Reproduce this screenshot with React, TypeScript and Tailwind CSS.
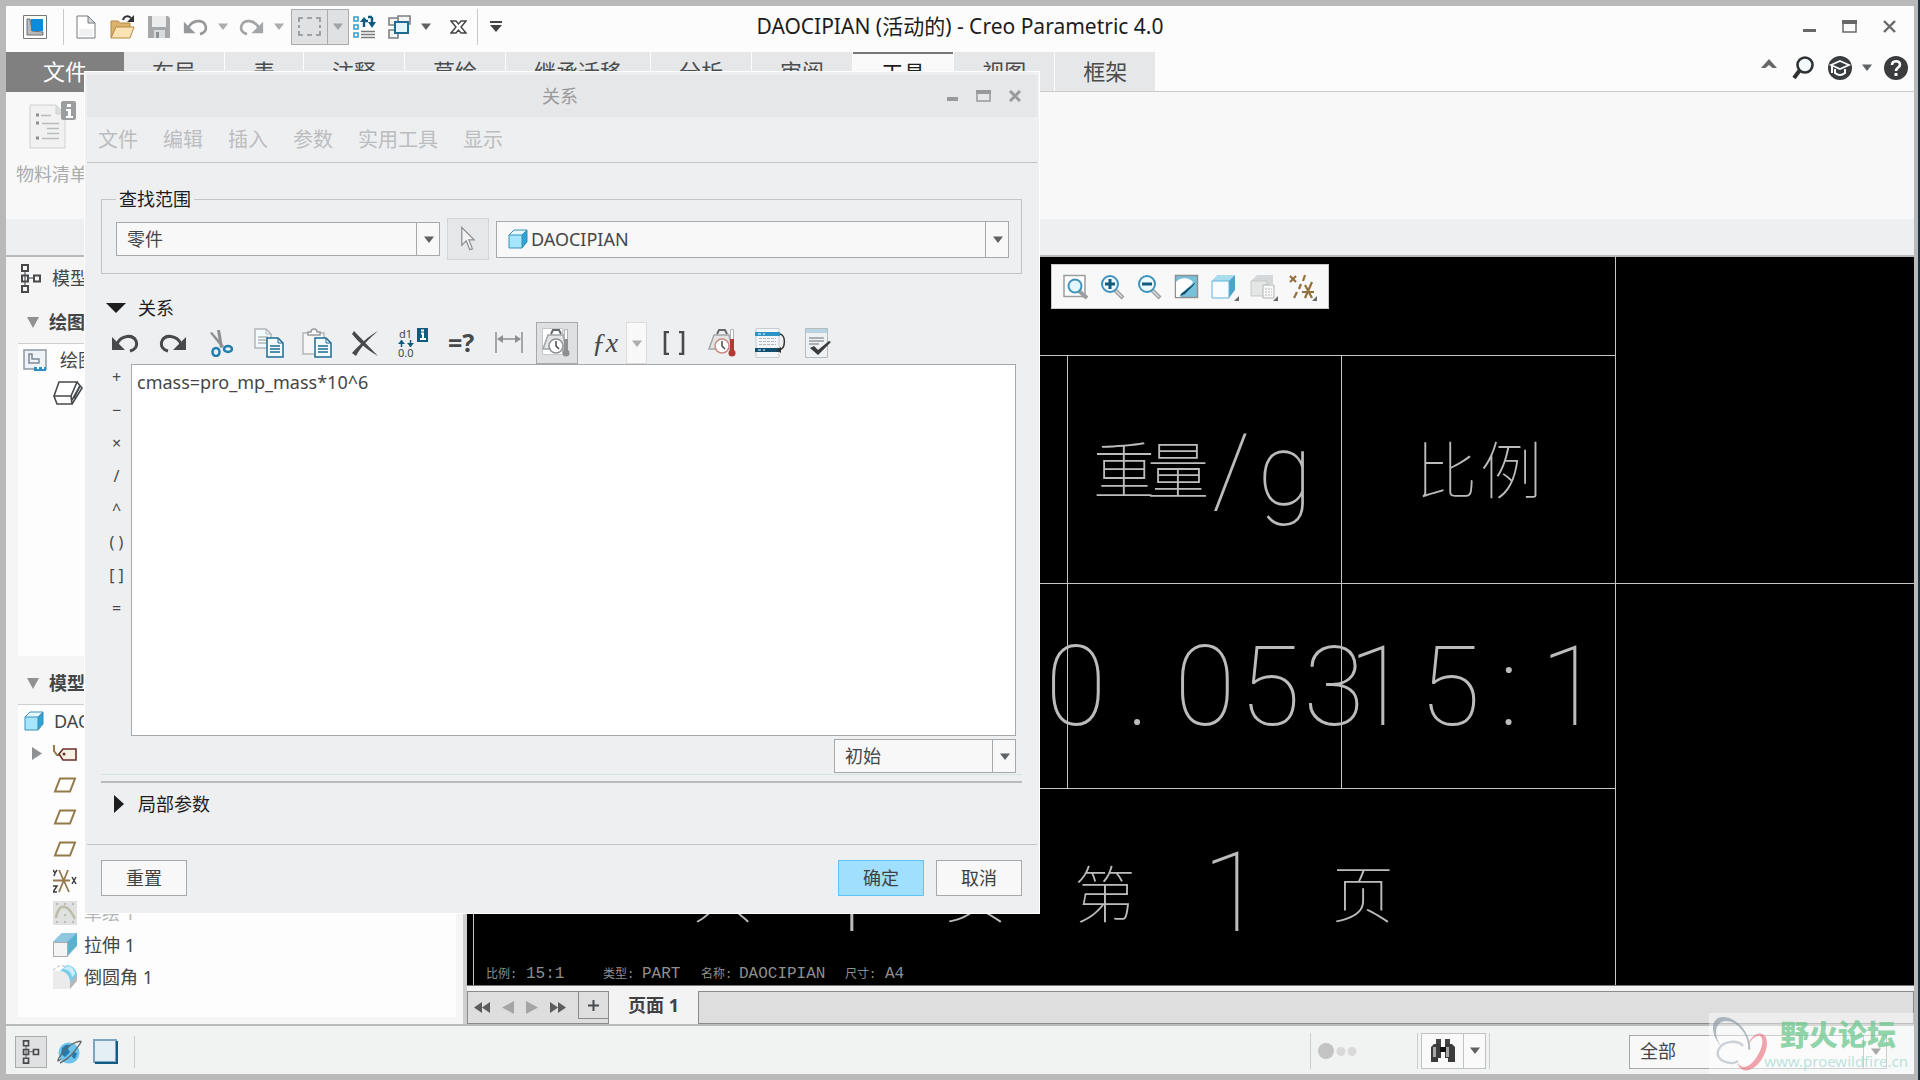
import type { ReactNode } from "react";

type IconProps = { w?: number; h?: number; vb?: string; className?: string; children: ReactNode };

function Svg({ w = 24, h = 24, vb, className = "", children }: IconProps) {
  return (
    <svg width={w} height={h} viewBox={vb ?? `0 0 ${w} ${h}`} fill="none" className={`shrink-0 ${className}`} aria-hidden="true">
      {children}
    </svg>
  );
}

const Down = ({ color = "#5f6163" }: { color?: string }) => (
  <Svg w={10} h={7}><path d="M0 0.5h10L5 7z" fill={color} /></Svg>
);

const Cube = () => (
  <Svg w={20} h={20}>
    <path d="M1 6l5-5h13v12l-5 6H1z" fill="#2fa4d8" />
    <path d="M6 1h13l-5 5H1z" fill="#e4f7fe" />
    <path d="M1 6h13v13H1z" fill="#a6e6fc" />
    <path d="M1 6l5-5h13v12l-5 6H1zM1 6h13v13M14 6l5-5" stroke="#3b8fb5" />
  </Svg>
);

const TreeIcon = ({ w = 20, h = 29 }: { w?: number; h?: number }) => (
  <Svg w={w} h={h} vb="0 0 20 29">
    <path d="M4 7v14M8 14h5" stroke="#77797b" strokeWidth="1.5" />
    <path d="M1 1h6v6H1zM1 11.5h6v6H1zM1 22h6v6H1zM13 11.5h6v6h-6z" stroke="#47494b" strokeWidth="2" />
  </Svg>
);

function UndoIcon({ color, w = 28, h = 20 }: { color: string; w?: number; h?: number }) {
  return (
    <Svg w={w} h={h} vb="0 0 28 20">
      <path d="M6 11C10 2 22 1 25 8c2 5-1 9-6 10" stroke={color} strokeWidth="3" />
      <path d="M1 4v13h13z" fill={color} />
    </Svg>
  );
}

function RedoIcon({ color, w = 28, h = 20 }: { color: string; w?: number; h?: number }) {
  return (
    <Svg w={w} h={h} vb="0 0 28 20">
      <path d="M22 11C18 2 6 1 3 8c-2 5 1 9 6 10" stroke={color} strokeWidth="3" />
      <path d="M27 4v13H14z" fill={color} />
    </Svg>
  );
}

const NewIcon = () => (
  <Svg w={20} h={24}>
    <path d="M1 1h11l7 7v15H1z" fill="#fff" stroke="#77797b" />
    <path d="M3 14h14v7H3z" fill="#f0f1f2" />
    <path d="M12 1v7h7z" fill="#d5d7d9" stroke="#77797b" />
  </Svg>
);

const OpenIcon = () => (
  <Svg w={25} h={24}>
    <path d="M1 23V6h7l2 2h10v4" fill="#dbb36c" stroke="#b58a42" />
    <path d="M1 23l5-11h18l-4 11z" fill="#fbe3b4" stroke="#b58a42" />
    <path d="M13 5c1-4 5-5 8-2" stroke="#333" strokeWidth="2" />
    <path d="M24 0v7h-7z" fill="#333" />
  </Svg>
);

const SaveIcon = () => (
  <Svg w={24} h={24}>
    <path d="M1 1h20l2 2v20H1z" fill="#a6a8aa" />
    <path d="M5 1h14v11H5z" fill="#ececec" />
    <path d="M7 15h11v8H7z" fill="#d9dadb" />
    <path d="M9 17h3v6H9z" fill="#8e9092" />
  </Svg>
);

const AppIcon = () => (
  <Svg w={24} h={24}>
    <path d="M.5.5h23v23H.5z" fill="#fff" stroke="#777" />
    <path d="M4 4h3l2 12 11 1v3H4z" fill="#b9bbbd" stroke="#6d6f71" />
    <path d="M8 4h12v12H8z" fill="#0d8bdb" />
  </Svg>
);

const RegenIcon = () => (
  <Svg w={23} h={24}>
    <path d="M1 2h4v4H1zM1 10h4v4H1zM1 18h4v4H1z" stroke="#3a9ed0" strokeWidth="1.6" />
    <path d="M8 16.500h14M8 19.500h14M8 22.500h14" stroke="#77797b" strokeWidth="1.5" />
    <path d="M11 12V6h4M19 2v6M15 2h4" stroke="#115a80" strokeWidth="2.4" />
    <path d="M7 7h8l-4-5zM15 7h8l-4 6z" fill="#115a80" />
  </Svg>
);

const WindowsIcon = () => (
  <Svg w={23} h={24}>
    <path d="M10 1h12v8H10zM1 3h9v7H1zM1 15h9v8H1z" fill="#f4f4f4" stroke="#7d7f81" strokeWidth="1.6" />
    <path d="M7 7h13v11H7z" fill="#e6f6fd" stroke="#1e6c94" strokeWidth="2" />
  </Svg>
);

const CloseWinIcon = () => (
  <Svg w={17} h={14}>
    <path d="M1 1h5l2.500 3L11 1h5l-5 6 5 6h-5l-2.500-3L6 13H1l5-6z" fill="#fff" stroke="#444" strokeWidth="1.4" />
  </Svg>
);

const DropBtn = ({ label, color }: { label: string; color?: string }) => (
  <button aria-label={label} className="ml-[3px] flex w-6 justify-center"><Down color={color} /></button>
);

function TitleBar() {
  return (
    <header className="relative flex h-[46px] shrink-0 items-center bg-[#fcfcfc]">
      <h1 className="absolute inset-x-0 top-1 bottom-1 text-center text-[21px] leading-8 text-[#1d1d1d]">
        DAOCIPIAN (活动的) - Creo Parametric 4.0
      </h1>
      <div className="relative flex items-center pb-[5px]">
        <button aria-label="应用程序" className="ml-[17px]"><AppIcon /></button>
        <span className="ml-4 h-9 w-px bg-[#c9c9c9]" />
        <button aria-label="新建" className="ml-3"><NewIcon /></button>
        <button aria-label="打开" className="ml-3.5"><OpenIcon /></button>
        <button aria-label="保存" className="ml-3"><SaveIcon /></button>
        <button aria-label="撤消" className="ml-3"><UndoIcon color="#97999b" w={25} h={18} /></button>
        <DropBtn label="撤消列表" color="#adadad" />
        <button aria-label="重做" className="ml-1"><RedoIcon color="#a3a5a7" w={25} h={18} /></button>
        <DropBtn label="重做列表" color="#adadad" />
        <div className="flex h-9 items-stretch border border-[#ababab] bg-[#e0e1e3]">
          <button aria-label="选择" className="flex w-[35px] items-center justify-center">
            <Svg w={23} h={19}><path d="M1 5V1h4M9 1h5M18 1h4v4M22 8v3M22 14v4h-4M14 18H9M5 18H1v-4M1 11V8" stroke="#8c8e90" strokeWidth="1.6" /></Svg>
          </button>
          <button aria-label="选择选项" className="flex w-[21px] items-center justify-center border-l border-[#ababab]"><Down color="#a3a3a3" /></button>
        </div>
        <button aria-label="重新生成" className="ml-1"><RegenIcon /></button>
        <button aria-label="窗口" className="ml-3"><WindowsIcon /></button>
        <DropBtn label="窗口列表" />
        <button aria-label="关闭窗口" className="ml-3"><CloseWinIcon /></button>
        <span className="ml-2.5 h-9 w-px bg-[#c9c9c9]" />
        <button aria-label="自定义" className="ml-3">
          <Svg w={12} h={11}><path d="M0 0h12v2H0zM0 4h12L6 11z" fill="#444" /></Svg>
        </button>
      </div>
      <div className="relative ml-auto flex items-center gap-[26px] pr-[18px] pb-1.5">
        <button aria-label="最小化"><Svg w={13} h={13}><path d="M0 9h13v3H0z" fill="#66686a" /></Svg></button>
        <button aria-label="最大化"><Svg w={15} h={13}><path d="M1 1h13v11H1z" stroke="#66686a" strokeWidth="1.5" /><path d="M0 0h15v4H0z" fill="#66686a" /></Svg></button>
        <button aria-label="关闭"><Svg w={13} h={13}><path d="M1 1l11 11M12 1L1 12" stroke="#66686a" strokeWidth="2.4" /></Svg></button>
      </div>
    </header>
  );
}

const tabs = ["布局", "表", "注释", "草绘", "继承迁移", "分析", "审阅", "工具", "视图", "框架"];

function Ribbon() {
  return (
    <>
      <nav className="flex h-10 shrink-0 items-stretch border-b border-[#cccccc] bg-[#fcfcfc] text-[22px] leading-9">
        <button className="-mb-px bg-[#808080] px-[37px] pb-[3px] text-white">文件</button>
        <div className="flex gap-px">
          {tabs.map((t) => (
            <button
              key={t}
              className={
                t === "工具"
                  ? "-mb-px border-t-2 border-[#777777] bg-[#f9f9f9] px-7 pb-1 text-[#1d1d1d]"
                  : "bg-[#e6e7e9] px-7 pb-0.5 text-[#4a4c4e]"
              }
            >
              {t}
            </button>
          ))}
        </div>
        <div className="ml-auto flex items-center pr-1.5 pb-2">
          <button aria-label="折叠功能区" className="mr-[15px] pb-2"><Svg w={16} h={9}><path d="M0 9L8 0l8 9h-4.500L8 6 4.500 9z" fill="#66686a" /></Svg></button>
          <button aria-label="搜索" className="mr-3.5">
            <Svg w={22} h={23}><path d="M8 14l-6 8" stroke="#2f3133" strokeWidth="4" /><circle cx="13" cy="9" r="7.500" fill="#f2fafd" stroke="#2f3133" strokeWidth="2.600" /></Svg>
          </button>
          <button aria-label="学习中心">
            <Svg w={24} h={24}><circle cx="12" cy="12" r="12" fill="#3a3c3e" /><path d="M12 5l9 4-9 4-9-4z" fill="#3a3c3e" stroke="#fff" strokeWidth="1.700" /><path d="M7 13v4c3 2.500 7 2.500 10 0v-4M4 10v7" stroke="#fff" strokeWidth="2" /></Svg>
          </button>
          <DropBtn label="学习中心列表" />
          <button aria-label="帮助" className="ml-[5px]">
            <Svg w={24} h={24}><circle cx="12" cy="12" r="12" fill="#3a3c3e" /><path d="M8 9c0-5 8-5 8-.5 0 3-4 3-4 6.500" stroke="#fff" strokeWidth="2.600" /><path d="M10.500 17h3v3h-3z" fill="#fff" /></Svg>
          </button>
        </div>
      </nav>
      <section className="h-[127px] shrink-0 bg-[#f8f8f8] pt-[9px] pl-2.5">
        <button disabled className="flex flex-col items-start text-[18px] leading-7 text-[#a9abad]">
          <Svg w={50} h={49} className="ml-[13px]">
            <path d="M1 4h26l9 9v34H1z" fill="#f1f1f1" stroke="#cfd0d1" />
            <path d="M27 4v9h9z" fill="#dddede" stroke="#cfd0d1" />
            <path d="M7 14h3M7 22h3M7 37h3" stroke="#8c8e90" strokeWidth="3" />
            <path d="M12 14.500h10M13 22.500h17M18 27.500h12M18 32.500h12M13 37.500h17" stroke="#b9bbbd" strokeWidth="1.500" />
            <rect x="32" y="0" width="15" height="19" rx="2" fill="#9b9d9f" />
            <path d="M38 3h4v3h-4zM37 8h5v7h2v2h-7v-2h2v-5h-2z" fill="#fff" />
          </Svg>
          <span className="mt-2.5">物料清单</span>
        </button>
      </section>
      <div className="h-[38px] shrink-0 border-b-2 border-[#b9b9b9] bg-[#eeeff1]" />
    </>
  );
}

const Plane = () => (
  <Svg w={24} h={16}><path d="M7 1.500h15l-5 13H2z" fill="#fff" stroke="#94794a" strokeWidth="2" /></Svg>
);

function Row({ icon, label, dim = false, caret = false }: { icon: ReactNode; label?: string; dim?: boolean; caret?: boolean }) {
  return (
    <li className={`flex h-8 items-center pl-3.5 text-[18px] leading-8 ${dim ? "text-[#b4b6b8]" : "text-[#444648]"}`}>
      <span className="w-[21px]">{caret && <Svg w={11} h={13}><path d="M0 0l10 6.500L0 13z" fill="#8f9193" /></Svg>}</span>
      <span className="flex w-[31px]">{icon}</span>
      {label}
    </li>
  );
}

function SidePanel() {
  return (
    <aside className="flex w-[457px] shrink-0 flex-col bg-[#f5f5f5] pr-[7px] pb-[7px] pl-3 text-[#444648]">
      <div className="flex h-[43px] shrink-0 items-center gap-[11px] pl-[3px] text-[18px]"><TreeIcon />模型树</div>
      <h2 className="flex h-11 shrink-0 items-center gap-2.5 border-b border-[#cfcfcf] pt-px pl-[9px] text-[18px] font-bold">
        <Svg w={12} h={11}><path d="M0 0h12L6 11z" fill="#8f9193" /></Svg>绘图树
      </h2>
      <div className="h-[312px] shrink-0 bg-[#fdfdfd] pl-[5px] text-[18px]">
        <div className="flex h-8 items-center gap-[13px]">
          <Svg w={24} h={22}>
            <path d="M1 1h22v19H1z" fill="#eef3f7" stroke="#8d99a3" strokeWidth="1.500" />
            <path d="M6 5h3v5h7v4H6z" stroke="#7f8b95" strokeWidth="1.500" />
            <path d="M11 18h12v4H11z" fill="#2b8fc7" />
            <path d="M14 19h2M19 19h2" stroke="#fff" strokeWidth="2" />
          </Svg>
          绘图
        </div>
        <div className="pt-[5px] pl-[30px]">
          <Svg w={30} h={24}>
            <path d="M6 1h18l-6 14H1z" fill="#fff" stroke="#47494b" strokeWidth="1.600" />
            <path d="M1 15l3 8h15l-1-8M19 23l10-16-5-6M21 17l6-12" stroke="#47494b" strokeWidth="1.600" />
            <path d="M19 19L27 5" stroke="#47494b" strokeWidth="1.600" />
          </Svg>
        </div>
      </div>
      <h2 className="flex h-[49px] shrink-0 items-center gap-2.5 border-b border-[#cfcfcf] pt-1.5 pl-[9px] text-[18px] font-bold">
        <Svg w={12} h={11}><path d="M0 0h12L6 11z" fill="#8f9193" /></Svg>模型树
      </h2>
      <ul className="min-h-0 flex-1 overflow-hidden bg-[#fdfdfd]">
        <li className="flex h-8 items-center gap-2.5 pl-1.5 text-[18px]"><Cube />DAOCIPIAN.PRT</li>
        <Row caret icon={
          <Svg w={24} h={17}><path d="M1 0v6l3 4h4" stroke="#94794a" strokeWidth="2" /><path d="M6 9l4-5h13v11H10z" fill="#f7f1e4" stroke="#6b3028" strokeWidth="1.600" /><circle cx="11" cy="9" r="1.500" fill="#6b3028" /></Svg>
        } />
        <Row icon={<Plane />} />
        <Row icon={<Plane />} />
        <Row icon={<Plane />} />
        <Row icon={
          <Svg w={24} h={24}>
            <path d="M0 11.500h17M6 1l10 22M15 1L6 23" stroke="#94794a" strokeWidth="1.800" />
            <path d="M0 1l2 3 2-3M2 4L1 7M0 17h4l-4 6h4M19 8l4 7M23 8l-4 7" stroke="#3a3c3e" strokeWidth="1.500" />
          </Svg>
        } />
        <Row dim label="草绘 1" icon={
          <Svg w={24} h={24}>
            <path d="M0 0h24v24H0z" fill="#e0e1e1" />
            <path d="M3 3h2M11 3h2M19 3h2M3 12h2M19 21h2M11 21h2M3 21h2M11 14h2" stroke="#bcbcae" strokeWidth="2" />
            <path d="M3 17C5 6 9 5 12 6c4 1 7 6 10 12" stroke="#bdbda8" strokeWidth="2.500" />
          </Svg>
        } />
        <Row label="拉伸 1" icon={
          <Svg w={24} h={24}>
            <path d="M0 9l9-9h15v13L14 24V9z" fill="#5fb0cf" />
            <path d="M9 0h15L14 9H0z" fill="#8fc8de" />
            <path d="M14 23l10-10V14z" fill="#d4effa" />
            <path d="M.5 9.500h14v14H.5z" fill="#f4f4f4" stroke="#a9abad" />
          </Svg>
        } />
        <Row label="倒圆角 1" icon={
          <Svg w={24} h={24}>
            <path d="M0 6h7c7 0 10 6 10 10v8H0z" fill="#ebebeb" />
            <path d="M17 16l7-7v7l-7 8z" fill="#b5b7b9" />
            <path d="M7 6l7-6c7 1 10 6 10 10l-7 8C17 11 13 6 7 6z" fill="#7accec" />
            <path d="M10 4l5-3c5 1 7 5 7 8l-3 3c0-4-4-8-9-8z" fill="#c9edfa" />
            <path d="M0 5l6-4h6" stroke="#b5b7b9" strokeDasharray="3 2" />
          </Svg>
        } />
      </ul>
    </aside>
  );
}

const Corner = ({ x, y }: { x: number; y: number }) => <path d={`M${x} ${y}v-5l-5 5z`} fill="#66686a" />;

function Magnifier({ children }: { children?: ReactNode }) {
  return (
    <Svg w={26} h={26}>
      <path d="M15 16l8 8" stroke="#9b9d9f" strokeWidth="4" />
      <path d="M15 16l7 7" stroke="#dcddde" strokeWidth="1.500" />
      <circle cx="10" cy="10" r="8" fill="#eef9fe" stroke="#3f93ba" strokeWidth="2" />
      {children}
    </Svg>
  );
}

function ViewToolbar() {
  return (
    <div role="toolbar" aria-label="视图控制" className="absolute top-[7px] left-[584px] flex h-[45px] items-center gap-[11px] border border-[#c9c9c9] bg-[#f8f8f8] px-[11px]">
      <button aria-label="重新调整">
        <Svg w={26} h={26}>
          <path d="M1 1.500h21v21H1z" fill="#fff" stroke="#9b9d9f" strokeWidth="1.500" />
          <path d="M16 17l8 7" stroke="#9b9d9f" strokeWidth="4" />
          <circle cx="12" cy="12" r="6.500" fill="#e4f5fc" stroke="#3f93ba" strokeWidth="2" />
        </Svg>
      </button>
      <button aria-label="放大"><Magnifier><path d="M10 5v10M5 10h10" stroke="#115a80" strokeWidth="3" /></Magnifier></button>
      <button aria-label="缩小"><Magnifier><path d="M5 10h10" stroke="#115a80" strokeWidth="3" /></Magnifier></button>
      <button aria-label="重画">
        <Svg w={26} h={26}>
          <path d="M1.500 1.500h22v22h-22z" fill="#79c0da" stroke="#8d8f91" strokeWidth="1.500" />
          <path d="M2 8c3-4 12-6 17 0-2 4-6 6-10 10l-3 5H2z" fill="#fff" />
          <path d="M22 8c-3 5-8 8-11 12l-5 2c1-4 5-4 7-7 3-2 5-4 9-7z" fill="#0f4f70" />
        </Svg>
      </button>
      <button aria-label="显示样式">
        <Svg w={28} h={28}>
          <path d="M1 8l6-6h17v15l-6 8H1z" fill="#4da4cb" />
          <path d="M7 2h17l-6 6H1z" fill="#aadcf0" />
          <path d="M1 8h17v17H1z" fill="#f6fcff" stroke="#62b4d8" />
          <Corner x={28} y={28} />
        </Svg>
      </button>
      <button aria-label="已保存方向">
        <Svg w={28} h={28}>
          <path d="M1 8l6-6h16v9h-4v12H1z" fill="#d6d7d8" />
          <path d="M1 8h16v15H1z" fill="#e4e5e5" stroke="#c6c7c8" />
          <path d="M13 12h11v13H13z" fill="#f8f8f8" stroke="#b4b5b6" />
          <path d="M15 16h7M15 19h7M15 22h7" stroke="#b4b5b6" strokeDasharray="2 1" />
          <Corner x={28} y={28} />
        </Svg>
      </button>
      <button aria-label="基准显示过滤器">
        <Svg w={28} h={28}>
          <path d="M1 3l6 6M7 3L1 9M16 2l-2 6M12 11l-2 5M8 19l-3 6M13 19h12M23 9l-7 16M16 12l7 13" stroke="#94703a" strokeWidth="2.200" />
          <Corner x={28} y={28} />
        </Svg>
      </button>
    </div>
  );
}

function Canvas() {
  return (
    <div className="relative min-h-0 flex-1 overflow-hidden border-b border-[#777777] bg-black">
      <svg className="absolute inset-0 h-full w-full" role="img" aria-label="工程图">
        <path
          d="M6.500 0V728M600.500 98V531M874.500 98V531M1148.500 0V728M6 98.500H1148M6 326.500H2400M6 531.500H1148"
          stroke="#c6c6c6"
          shapeRendering="crispEdges"
        />
        <g className="fill-[#bcbcbc] font-thin" textAnchor="middle">
          <g className="font-['Noto_Sans_CJK_SC',sans-serif] text-[62px]">
            <text x="657 711" y="237">重量</text>
            <text x="979 1044" y="237">比例</text>
            <text x="256" y="661">共</text>
            <text x="509" y="661">页</text>
            <text x="638" y="661">第</text>
            <text x="896" y="661">页</text>
          </g>
          <g className="font-['Roboto','Noto_Sans_CJK_SC',sans-serif]">
            <text x="764 818" y="248" className="text-[100px]">/g</text>
            <text x="609 671 738 803 867" y="468" className="text-[112px]">0.053</text>
            <text x="912 983 1042 1104" y="468" className="text-[112px]">15:1</text>
            <text x="381" y="674" className="text-[112px]">1</text>
            <text x="766" y="674" className="text-[112px]">1</text>
          </g>
        </g>
        <g className="fill-[#8f8f8f] font-['Liberation_Mono','Noto_Sans_CJK_SC',monospace] text-[16px]">
          <text x="19" y="721" className="text-[12px]">比例:</text>
          <text x="59" y="721">15:1</text>
          <text x="136" y="721" className="text-[12px]">类型:</text>
          <text x="175" y="721">PART</text>
          <text x="234" y="721" className="text-[12px]">名称:</text>
          <text x="272" y="721">DAOCIPIAN</text>
          <text x="378" y="721" className="text-[12px]">尺寸:</text>
          <text x="418" y="721">A4</text>
        </g>
      </svg>
      <ViewToolbar />
    </div>
  );
}

function SheetBar() {
  return (
    <div className="flex h-[38px] shrink-0 items-stretch bg-[#f3f3f3] pt-[5px]">
      <div className="flex items-center gap-3 border border-[#8a8a8a] bg-[#dedede] pl-1.5">
        <button aria-label="第一页"><Svg w={16} h={11}><path d="M8 0v11L0 5.500zM16 0v11L8 5.500z" fill="#5a5c5e" /></Svg></button>
        <button aria-label="上一页"><Svg w={12} h={13}><path d="M12 0v13L0 6.500z" fill="#a3a5a7" /></Svg></button>
        <button aria-label="下一页"><Svg w={12} h={13}><path d="M0 0v13l12-6.500z" fill="#a3a5a7" /></Svg></button>
        <button aria-label="最后一页"><Svg w={16} h={11}><path d="M0 0v11l8-5.500zM8 0v11l8-5.500z" fill="#5a5c5e" /></Svg></button>
        <button aria-label="新页面" className="flex h-[27px] w-[30px] items-center justify-center self-start border-b border-l border-[#8a8a8a]">
          <Svg w={11} h={11}><path d="M5.500 0v11M0 5.500h11" stroke="#47494b" strokeWidth="2" /></Svg>
        </button>
      </div>
      <button className="w-[89px] pb-1.5 text-[18px] leading-7 font-bold text-[#3f4143]">页面 1</button>
      <div className="flex-1 border border-[#8a8a8a] bg-[#dedede]" />
    </div>
  );
}

function StatusBar() {
  return (
    <footer className="flex h-[50px] shrink-0 items-center border-t-2 border-[#b9b9b9] bg-[#f1f3f2] pt-[3px]">
      <button aria-label="模型树" className="ml-[9px] flex h-8 w-8 items-center justify-center border border-[#ababab] bg-[#e0e1e3]">
        <TreeIcon w={18} h={24} />
      </button>
      <button aria-label="浏览器" className="ml-[9px]">
        <Svg w={26} h={26}>
          <circle cx="13" cy="14" r="10.500" fill="#6cc3ec" />
          <path d="M6 9c3-3 5-4 8-3l-2 4 2 3-5 5-4-3zM17 13l4 1-2 6-3-2z" fill="#2279ab" />
          <path d="M5 20C-3 27 6 13 12 8S26 1 25 3 21 9 17 14 8 22 4 24" stroke="#66686a" strokeWidth="1.400" />
        </Svg>
      </button>
      <button aria-label="全屏" className="ml-[11px]">
        <Svg w={25} h={25}><path d="M1 1h22v22H1z" fill="#e3eef5" stroke="#7fa5bc" strokeWidth="2" /><path d="M24 2v22H2" stroke="#115a80" strokeWidth="2" /></Svg>
      </button>
      <span className="ml-4 h-8 w-px bg-[#cdcdcd]" />
      <div className="ml-auto flex h-9 items-center pb-0.5">
        <span className="h-9 w-px bg-[#cdcdcd]" />
        <Svg w={40} h={18} className="ml-[7px]"><circle cx="8" cy="9" r="8" fill="#c3c3c3" /><circle cx="23" cy="9.500" r="4.500" fill="#d9d9d9" /><circle cx="34" cy="9.500" r="4.500" fill="#d9d9d9" /></Svg>
        <span className="ml-[59px] h-9 w-px bg-[#cdcdcd]" />
        <div className="ml-[3px] flex h-9 items-stretch border border-[#c0c2c4] bg-[#fafafa]">
          <button aria-label="查找" className="flex w-[41px] items-center justify-center">
            <Svg w={24} h={23}>
              <path d="M5 0h5v6H5zM14 0h5v6h-5z" fill="#444" />
              <path d="M0 8l3-3h7v14H7v4H0zM24 8l-3-3h-7v14h3v4h7z" fill="#3c3c3c" />
              <path d="M2 8h3v10H2zM15 8h3v10h-3z" fill="#a8a8a8" />
              <path d="M9 8h6v5H9z" fill="#111" />
            </Svg>
          </button>
          <button aria-label="查找列表" className="flex w-[22px] items-center justify-center border-l border-[#c0c2c4]"><Down /></button>
        </div>
        <span className="ml-[3px] h-9 w-px bg-[#cdcdcd]" />
      </div>
      <div className="mr-[27px] ml-[139px] w-[258px]"><Select label="过滤器" value="全部" className="h-[34px]" /></div>
    </footer>
  );
}

function Select({ label, value, className, indent = "pl-2.5", icon }: { label: string; value: string; className: string; indent?: string; icon?: ReactNode }) {
  return (
    <div className={`relative w-full ${className}`}>
      <select aria-label={label} className={`h-full w-full appearance-none rounded-none border border-[#a6a8aa] bg-[#f8f8f8] pr-7 text-[18px] text-[#444648] ${indent}`}>
        <option>{value}</option>
      </select>
      {icon && <span className="pointer-events-none absolute inset-y-0 left-3 flex items-center">{icon}</span>}
      <span className="pointer-events-none absolute inset-y-0 right-0 flex w-6 items-center justify-center border-l border-[#a6a8aa]"><Down /></span>
    </div>
  );
}

const menus = ["文件", "编辑", "插入", "参数", "实用工具", "显示"];

const Sheet = ({ x, y, stroke }: { x: number; y: number; stroke: string }) => (
  <g transform={`translate(${x} ${y})`}>
    <path d="M1 1h11l5 5v14H1z" fill="#f2fafe" stroke={stroke} strokeWidth="1.500" />
    <path d="M4 9h10M4 12h10M4 15h10" stroke={stroke} strokeWidth="1.500" />
    <path d="M12 1v5h5" stroke={stroke} />
  </g>
);

const Weight = ({ color, ring }: { color: string; ring: string }) => (
  <>
    <path d="M6 7h15l3 14H1z" fill="#e3e4e5" stroke="#a3a5a7" strokeWidth="1.500" />
    <path d="M9 6l2-4h6l2 4" stroke="#66686a" strokeWidth="2" />
    <circle cx="14" cy="18" r="7" fill="#fff" stroke={ring} strokeWidth="1.500" />
    <path d="M14 13v5l3 3" stroke="#47494b" strokeWidth="1.500" />
    <path d="M22.500 1.500h3v22h-3z" fill="#fff" stroke="#b0b2b4" />
    <path d="M22 11h4v12h-4z" fill={color} />
    <circle cx="24" cy="25" r="3.500" fill={color} />
  </>
);

const tools: { label: string; icon: ReactNode; active?: boolean }[] = [
  { label: "撤消", icon: <UndoIcon color="#47494b" /> },
  { label: "重做", icon: <RedoIcon color="#47494b" /> },
  {
    label: "剪切",
    icon: (
      <Svg w={24} h={27}>
        <path d="M1 3l2-1 12 14-2 2zM8 0h3l3 17-3 1z" fill="#8d8f91" />
        <ellipse cx="7" cy="22" rx="3.500" ry="4" stroke="#1e7fae" strokeWidth="2.500" />
        <ellipse cx="19" cy="19" rx="4" ry="3" stroke="#1e7fae" strokeWidth="2.500" />
      </Svg>
    ),
  },
  { label: "复制", icon: <Svg w={30} h={30}><Sheet x={0} y={0} stroke="#b4b6b8" /><Sheet x={12} y={9} stroke="#1e6c94" /></Svg> },
  {
    label: "粘贴",
    icon: (
      <Svg w={30} h={30}>
        <path d="M1 5h21v21H1z" fill="#f6f6f6" stroke="#b4b6b8" strokeWidth="1.500" />
        <path d="M6 7V4h3c0-4 6-4 6 0h3v3z" fill="#fff" stroke="#97999b" strokeWidth="1.500" />
        <Sheet x={12} y={9} stroke="#1e6c94" />
      </Svg>
    ),
  },
  { label: "删除", icon: <Svg w={28} h={27}><path d="M3 1c7 7 14 15 24 25C14 19 7 11 1 4zM27 1C20 7 10 16 5 26l-4-3C9 14 18 6 27 1z" fill="#47494b" /></Svg> },
  {
    label: "切换尺寸",
    icon: (
      <Svg w={30} h={32}>
        <path d="M19 1h11v14H19z" fill="#115a80" />
        <path d="M23 3.500h3M23 6.500h2v5M22 12h6" stroke="#fff" strokeWidth="2" />
        <path d="M3.500 13v7M12.500 13v7" stroke="#115a80" strokeWidth="1.500" />
        <path d="M0 17h7l-3.500-4zM9 16h7l-3.500 4z" fill="#115a80" />
        <text x="1" y="11" className="fill-[#47494b] text-[11px]">d1</text>
        <text x="0" y="30" className="fill-[#47494b] text-[11px]">0.0</text>
      </Svg>
    ),
  },
  { label: "计算表达式", icon: <span className="text-[25px] font-bold">=?</span> },
  { label: "尺寸", icon: <Svg w={28} h={22}><path d="M1 0v21M27 0v21M3 7h22" stroke="#8d8f91" strokeWidth="1.500" /><path d="M2 7l6-4v8zM26 7l-6-4v8z" fill="#8d8f91" /></Svg> },
  { label: "单位", active: true, icon: <Svg w={30} h={30}><path d="M.5.5h20v26H.5z" fill="#fff" stroke="#c6c7c8" /><Weight color="#8d8f91" ring="#8d8f91" /></Svg> },
];

function ToolButton({ label, icon, active }: { label: string; icon: ReactNode; active?: boolean }) {
  return (
    <button
      aria-label={label}
      className={`flex h-[42px] w-[42px] items-center justify-center text-[#47494b] ${active ? "border border-[#a6a8aa] bg-[#dfe0e2]" : ""}`}
    >
      {icon}
    </button>
  );
}

const symbols = ["+", "−", "×", "/", "^", "( )", "[ ]", "="];
const dialogButton = "h-9 w-[86px] border text-[18px] leading-8 text-[#3f4143]";

function RelationsDialog() {
  return (
    <div role="dialog" aria-labelledby="dlg-title" className="absolute top-[71px] left-[84px] flex w-[956px] flex-col border border-white bg-[#edeff1] p-0.5 pt-[3px]">
      <div className="relative flex h-[42px] items-center justify-end gap-[18px] bg-[#e6e7e9] pr-4">
        <h2 id="dlg-title" className="absolute inset-x-0 pr-1 text-center text-[18px] text-[#98999b]">关系</h2>
        <button aria-label="最小化" className="relative"><Svg w={11} h={11}><path d="M0 6h11v4H0z" fill="#98999b" /></Svg></button>
        <button aria-label="最大化" className="relative"><Svg w={15} h={12}><path d="M1 1h13v10H1z" stroke="#98999b" strokeWidth="1.500" /><path d="M0 0h15v4H0z" fill="#98999b" /></Svg></button>
        <button aria-label="关闭" className="relative"><Svg w={12} h={12}><path d="M1 1l10 10M11 1L1 11" stroke="#98999b" strokeWidth="3" /></Svg></button>
      </div>
      <nav className="flex h-[46px] items-center gap-[25px] border-b border-[#c2c5c8] pt-px pl-[11px] text-[20px] text-[#bcbdbf]">
        {menus.map((m) => <button key={m}>{m}</button>)}
      </nav>
      <div className="pt-6 pr-[15px] pl-3.5">
        <fieldset className="border border-[#c2c5c8] pr-3 pb-[13px] pl-3.5">
          <legend className="px-[3px] text-[18px] leading-6 text-[#1d1d1d]">查找范围</legend>
          <div className="flex items-center gap-[7px] pt-[7px]">
            <div className="w-[324px] shrink-0"><Select label="对象类型" value="零件" className="h-[34px]" /></div>
            <button aria-label="选取" className="flex h-[42px] w-[42px] shrink-0 items-center justify-center border border-[#d3d5d7] bg-[#e6e7e9]">
              <Svg w={16} h={26} vb="0 0 18 28"><path d="M2 1v20l5-5 4 10 3-1-4-10h6z" fill="#f3f3f3" stroke="#8d8f91" strokeWidth="1.400" /></Svg>
            </button>
            <Select label="对象" value="DAOCIPIAN" className="h-[37px]" indent="pl-[34px]" icon={<Cube />} />
          </div>
        </fieldset>
        <button className="mt-5 flex h-7 items-center gap-3 pl-[5px] text-[18px] text-[#1d1d1d]">
          <Svg w={20} h={10}><path d="M0 0h20L10 10z" fill="#1d1d1d" /></Svg>关系
        </button>
        <div role="toolbar" aria-label="关系" className="flex h-[42px] gap-1.5 pl-[3px]">
          {tools.map((t) => <ToolButton key={t.label} {...t} />)}
          <div className="flex">
            <ToolButton label="函数" icon={<span className="font-['Liberation_Serif',serif] text-[28px] italic">ƒx</span>} />
            <button aria-label="函数列表" className="flex w-[21px] items-center justify-center border border-[#dcdcdc] bg-[#f8f8f8]"><Down color="#adadad" /></button>
          </div>
          <ToolButton label="方括号" icon={<Svg w={22} h={24}><path d="M6 1H2v22h4M16 1h4v22h-4" stroke="#47494b" strokeWidth="2.600" /></Svg>} />
          <ToolButton label="参数单位" icon={<Svg w={28} h={30}><Weight color="#b13a35" ring="#c98a80" /></Svg>} />
          <ToolButton label="排序" icon={
            <Svg w={31} h={30}>
              <path d="M1 .5h23v29H1z" fill="#f2f6f9" stroke="#c6ccd1" />
              <path d="M0 4h25v4H0z" fill="#2b94c4" /><path d="M0 20h25v4H0z" fill="#0f4f70" />
              <path d="M3 6h3M8 6h2M3 22h3M8 22h2" stroke="#fff" />
              <path d="M4 10.500h17M4 13.500h17M4 16.500h17" stroke="#b4b6b8" strokeDasharray="3 1" />
              <path d="M25 6c6 1 6 15-1 16" stroke="#333" strokeWidth="1.500" /><path d="M26 19v6l-5-3z" fill="#333" />
            </Svg>
          } />
          <ToolButton label="校验" icon={
            <Svg w={30} h={30}>
              <path d="M2.500.5h22v29h-22z" fill="#eef2f5" stroke="#b4bcc2" />
              <path d="M3 1h21v4H3z" fill="#b9d3e0" />
              <path d="M6 10h15M6 13h15M6 16h10" stroke="#97999b" strokeWidth="1.500" />
              <path d="M7 20l4-2 4 4L26 13l2 1-13 13z" fill="#3a3c3e" />
            </Svg>
          } />
        </div>
        <div className="flex pr-1.5">
          <div className="-mt-1 flex w-[30px] shrink-0 flex-col pl-px">
            {symbols.map((s) => (
              <button key={s} className="h-[33px] text-[16px] leading-7 whitespace-nowrap text-[#47494b]">{s}</button>
            ))}
          </div>
          <textarea
            aria-label="关系"
            defaultValue="cmass=pro_mp_mass*10^6"
            spellCheck={false}
            className="h-[372px] min-w-0 flex-1 resize-none border border-[#a6a8aa] bg-white px-[5px] py-px text-[18px] leading-8 text-[#444648]"
          />
        </div>
        <div className="mt-[3px] mr-1.5 ml-auto w-[182px]"><Select label="状态" value="初始" className="h-[34px]" /></div>
        <div className="mt-px h-[9px] border-t border-b-2 border-t-[#d5e3e3] border-b-[#b9bbbd]" />
        <button className="mt-[7px] mb-[26px] flex h-7 items-center gap-3.5 pl-[13px] text-[18px] text-[#1d1d1d]">
          <Svg w={10} h={18}><path d="M0 0l10 9L0 18z" fill="#1d1d1d" /></Svg>局部参数
        </button>
      </div>
      <div className="flex gap-3 border-t border-[#c2c5c8] pt-[15px] pr-[15px] pb-[15px] pl-3.5">
        <button className={`mr-auto border-[#a6a8aa] bg-[#f8f8f8] ${dialogButton}`}>重置</button>
        <button className={`border-[#5fc4fb] bg-[#a0dffe] ${dialogButton}`}>确定</button>
        <button className={`border-[#a6a8aa] bg-[#f8f8f8] ${dialogButton}`}>取消</button>
      </div>
    </div>
  );
}

function Watermark() {
  return (
    <div className="pointer-events-none absolute right-1 bottom-1.5 flex h-[61px] w-[205px] bg-white/45">
      <Svg w={60} h={60} className="opacity-65">
        <path d="M41 37C43 24 30 4 14 4 2 4 0 20 12 33 4 22 6 9 16 8 29 7 41 24 39 36z" fill="#8797a6" />
        <path d="M39 32c3-10 12-15 17-9 6 9-3 30-16 34-8 2-11-4-11-7 4 7 12 4 18-5 7-10 8-20 4-22-4-1-8 3-12 9z" fill="#ea7580" />
        <path d="M34 33C28 26 12 28 9 38s14 15 20 10" stroke="#b4bcc6" strokeWidth="2.500" />
      </Svg>
      <div className="absolute top-1.5 right-1.5 flex flex-col items-end whitespace-nowrap">
        <span className="pr-3 text-[29px] leading-8 font-black text-[#6fc890]/75">野火论坛</span>
        <span className="text-[15px] leading-5 text-[#a9dcd6]/80">www.proewildfire.cn</span>
      </div>
    </div>
  );
}

export default function App() {
  return (
    <div className="relative flex h-screen flex-col overflow-hidden border-r-2 border-[#1b3245] bg-[#b9b9b9] py-1.5 pr-1 pl-1.5 font-['Noto_Sans','Noto_Sans_CJK_SC',sans-serif]">
      <TitleBar />
      <Ribbon />
      <main className="flex min-h-0 flex-1">
        <SidePanel />
        <div className="w-1 shrink-0 bg-[#cfcfcf]" />
        <div className="flex min-w-0 flex-1 flex-col">
          <Canvas />
          <SheetBar />
        </div>
      </main>
      <StatusBar />
      <RelationsDialog />
      <Watermark />
    </div>
  );
}
